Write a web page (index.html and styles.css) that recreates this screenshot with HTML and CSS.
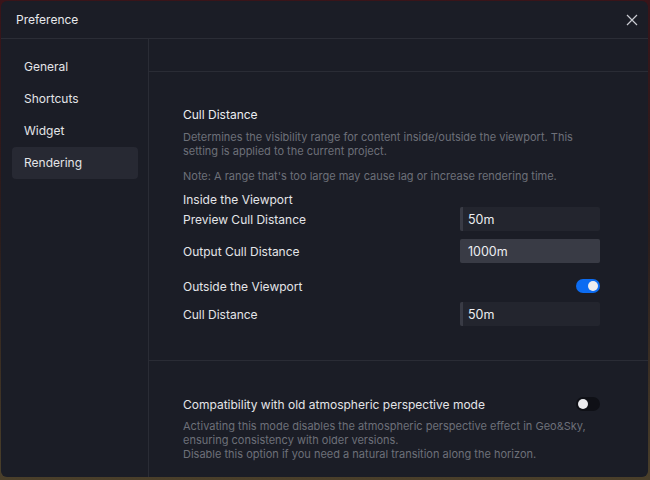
FILE: index.html
```html
<!DOCTYPE html>
<html lang="en">

<head>
    <meta charset="UTF-8">
    <meta name="viewport" content="width=device-width, initial-scale=1.0">
    <title>Preference</title>

    <link rel="stylesheet" href="styles.css">

</head>

<body>

    <div class="dialog">
        <div class="dialog-header">
            <span class="dialog-title">Preference</span>
            <button class="close-btn" aria-label="Close">
                <svg width="12" height="12" viewBox="0 0 12 12">
                    <path d="M1 1 L11 11 M11 1 L1 11" stroke="#c9cbd1" stroke-width="1.2" fill="none"/>
                </svg>
            </button>
        </div>

        <div class="dialog-body">
            <!-- Menu lateral -->
            <ul class="side-nav">
                <li class="nav-item">General</li>
                <li class="nav-item">Shortcuts</li>
                <li class="nav-item">Widget</li>
                <li class="nav-item active">Rendering</li>
            </ul>

            <div class="panel">
                <div class="panel-top"></div>

                <!-- Cull distance -->
                <div class="section">
                    <h3 class="section-title">Cull Distance</h3>
                    <p class="hint">Determines the visibility range for content inside/outside the viewport. This setting is applied to the current project.</p>
                    <p class="hint note">Note: A range that's too large may cause lag or increase rendering time.</p>

                    <div class="group-title">Inside the Viewport</div>
                    <div class="row first">
                        <span class="label">Preview Cull Distance</span>
                        <div class="slider-input">
                            <div class="fill" style="width: 2%"></div>
                            <span class="value">50m</span>
                        </div>
                    </div>
                    <div class="row">
                        <span class="label">Output Cull Distance</span>
                        <div class="slider-input">
                            <div class="fill" style="width: 100%"></div>
                            <span class="value">1000m</span>
                        </div>
                    </div>

                    <div class="row toggle-row">
                        <span class="label">Outside the Viewport</span>
                        <span class="switch on"><span class="knob"></span></span>
                    </div>
                    <div class="row tight">
                        <span class="label">Cull Distance</span>
                        <div class="slider-input">
                            <div class="fill" style="width: 2%"></div>
                            <span class="value">50m</span>
                        </div>
                    </div>
                </div>

                <!-- Perspectiva atmosferica -->
                <div class="section second">
                    <div class="row compat">
                        <span class="label">Compatibility with old atmospheric perspective mode</span>
                        <span class="switch"><span class="knob"></span></span>
                    </div>
                    <p class="hint compat-hint">Activating this mode disables the atmospheric perspective effect in Geo&amp;Sky, ensuring consistency with older versions.<br>Disable this option if you need a natural transition along the horizon.</p>
                </div>
            </div>
        </div>
    </div>

</body>

</html>
```

FILE: styles.css
```css
* {
    box-sizing: border-box;
}

body {
    margin: 0;
    width: 650px;
    height: 480px;
    padding: 1px 2px 3px 1px;
    background: linear-gradient(180deg, #3a1419 0%, #2b1d1c 50%, #4a3f2a 100%);
    font-family: Inter, "Noto Sans", sans-serif;
    font-size: 12px;
    color: #e4e5e8;
    overflow: hidden;
}

.dialog {
    height: 100%;
    background-color: #1b1d26;
    border-radius: 6px;
    display: flex;
    flex-direction: column;
    overflow: hidden;
}

.dialog-header {
    height: 38px;
    flex-shrink: 0;
    display: flex;
    align-items: center;
    justify-content: space-between;
    padding: 0 9px 0 15px;
    border-bottom: 1px solid #2b2d36;
}

.dialog-title {
    font-size: 12px;
    color: #e8e9ec;
}

.close-btn {
    background: none;
    border: none;
    padding: 0;
    width: 14px;
    height: 14px;
    display: flex;
    align-items: center;
    justify-content: center;
}

.dialog-body {
    flex: 1;
    display: flex;
    min-height: 0;
}

/* --- menu lateral --- */
.side-nav {
    list-style: none;
    margin: 0;
    padding: 12px 10px 0 11px;
    width: 148px;
    flex-shrink: 0;
    border-right: 1px solid #2a2c35;
}

.nav-item {
    height: 32px;
    line-height: 32px;
    padding-left: 12px;
    border-radius: 4px;
    color: #e4e5e8;
}

.nav-item.active {
    background-color: #272933;
}

/* --- panel derecho --- */
.panel {
    flex: 1;
    display: flex;
    flex-direction: column;
}

.panel-top {
    height: 33px;
    border-bottom: 1px solid #2a2c35;
}

.section {
    padding: 34px 48px 34px 34px;
    border-bottom: 1px solid #2a2c35;
}

.section.second {
    border-bottom: none;
    padding-top: 31px;
    padding-bottom: 0;
}

.section-title {
    margin: 0;
    font-size: 12px;
    font-weight: 400;
    line-height: 18px;
    color: #eceef1;
}

.hint {
    margin: 6px 0 0;
    font-size: 11px;
    line-height: 14px;
    color: #6d7079;
}

.hint.note {
    margin-top: 11px;
}

.group-title {
    margin-top: 8px;
    line-height: 18px;
}

.row {
    display: flex;
    align-items: center;
    justify-content: space-between;
    height: 24px;
    margin-top: 8px;
}

.row.first {
    margin-top: -2px;
}

.row.toggle-row {
    margin-top: 11px;
}

.row.tight {
    margin-top: 4px;
}

.row.compat {
    margin-top: 0;
}

.compat-hint {
    margin-top: 3px;
}

.label {
    color: #e4e5e8;
}

/* entrada tipo slider */
.slider-input {
    position: relative;
    width: 140px;
    height: 24px;
    background-color: #23252e;
    border-radius: 2px;
    overflow: hidden;
    display: flex;
    align-items: center;
}

.slider-input .fill {
    position: absolute;
    left: 0;
    top: 0;
    bottom: 0;
    min-width: 3px;
    background-color: #393b45;
}

.slider-input .value {
    position: relative;
    padding-left: 8px;
    color: #eceef1;
    font-size: 12.5px;
}

/* interruptor */
.switch {
    width: 24px;
    height: 14px;
    border-radius: 7px;
    background-color: #0f1016;
    display: flex;
    align-items: center;
    padding: 0 2px;
}

.switch .knob {
    width: 10px;
    height: 10px;
    border-radius: 50%;
    background-color: #ececef;
}

.switch.on {
    background-color: #0c6cf2;
    justify-content: flex-end;
}
```
